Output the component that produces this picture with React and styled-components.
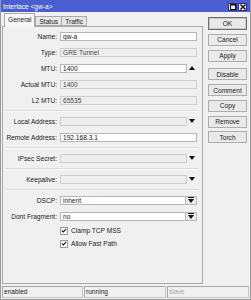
import React from "react";
import styled, { createGlobalStyle } from "styled-components";

const Global = createGlobalStyle`
	html, body {
		margin: 0;
		padding: 0;
		background: #f0f0f0;
	}
	* {
		box-sizing: border-box;
	}
`;

const Up = () => (
	<svg width="6" height="4" viewBox="0 0 6 4">
		<polygon points="0,4 6,4 3,0" fill="#111" />
	</svg>
);

const Down = () => (
	<svg width="6" height="4" viewBox="0 0 6 4">
		<polygon points="0,0 6,0 3,4" fill="#111" />
	</svg>
);

const DropIcon = () => (
	<svg width="6" height="6" viewBox="0 0 6 6">
		<rect x="0" y="0" width="6" height="1" fill="#111" />
		<polygon points="0,2 6,2 3,6" fill="#111" />
	</svg>
);

const Check = () => (
	<svg width="7" height="7" viewBox="0 0 7 7">
		<polyline points="1,3.5 2.8,5.3 6,1.5" fill="none" stroke="#111" strokeWidth="1.3" />
	</svg>
);

const App = () => {
	return (
		<>
			<Global />
			<Window>
				<TitleBar>
					<Title>Interface &lt;gw-a&gt;</Title>
					<TitleButtons>
						<TitleBtn>
							<svg width="6" height="6" viewBox="0 0 6 6">
								<rect x="0.5" y="0.5" width="5" height="5" fill="none" stroke="#111" />
								<rect x="0" y="0" width="6" height="1.5" fill="#111" />
							</svg>
						</TitleBtn>
						<TitleBtn>
							<svg width="6" height="6" viewBox="0 0 6 6">
								<path d="M0.5 0.5 L5.5 5.5 M5.5 0.5 L0.5 5.5" stroke="#111" strokeWidth="1.4" />
							</svg>
						</TitleBtn>
					</TitleButtons>
				</TitleBar>
				<Main>
					<Left>
						<Tabs>
							<Tab active>General</Tab>
							<Tab>Status</Tab>
							<Tab>Traffic</Tab>
						</Tabs>
						<Panel>
							<Row>
								<Label>Name:</Label>
								<Field>gw-a</Field>
							</Row>
							<Row>
								<Label>Type:</Label>
								<Field disabled>GRE Tunnel</Field>
							</Row>
							<Row>
								<Label>MTU:</Label>
								<Field short>1400</Field>
								<Arrow><Up /></Arrow>
							</Row>
							<Row>
								<Label>Actual MTU:</Label>
								<Field disabled>1400</Field>
							</Row>
							<Row>
								<Label>L2 MTU:</Label>
								<Field disabled>65535</Field>
							</Row>
							<Divider />
							<Row>
								<Label>Local Address:</Label>
								<Field short disabled></Field>
								<Arrow><Down /></Arrow>
							</Row>
							<Row>
								<Label>Remote Address:</Label>
								<Field>192.168.3.1</Field>
							</Row>
							<Divider />
							<Row>
								<Label>IPsec Secret:</Label>
								<Field short disabled></Field>
								<Arrow><Down /></Arrow>
							</Row>
							<Divider />
							<Row>
								<Label>Keepalive:</Label>
								<Field short disabled></Field>
								<Arrow><Down /></Arrow>
							</Row>
							<Divider />
							<Row>
								<Label>DSCP:</Label>
								<Combo>
									<ComboText>inherit</ComboText>
									<ComboBtn><DropIcon /></ComboBtn>
								</Combo>
							</Row>
							<Row>
								<Label>Dont Fragment:</Label>
								<Combo>
									<ComboText>no</ComboText>
									<ComboBtn><DropIcon /></ComboBtn>
								</Combo>
							</Row>
							<CheckRow>
								<Box><Check /></Box>
								<span>Clamp TCP MSS</span>
							</CheckRow>
							<CheckRow>
								<Box><Check /></Box>
								<span>Allow Fast Path</span>
							</CheckRow>
						</Panel>
					</Left>
					<Buttons>
						<Button primary>OK</Button>
						<Button>Cancel</Button>
						<Button>Apply</Button>
						<Button gap>Disable</Button>
						<Button>Comment</Button>
						<Button>Copy</Button>
						<Button>Remove</Button>
						<Button>Torch</Button>
					</Buttons>
				</Main>
				<StatusBar>
					<StatusCell w="81px">enabled</StatusCell>
					<StatusCell w="82px">running</StatusCell>
					<StatusCell faded>slave</StatusCell>
				</StatusBar>
			</Window>
		</>
	);
};

const Window = styled.div`
	width: 251px;
	height: 300px;
	display: flex;
	flex-direction: column;
	background: #f0f0f0;
	border-left: 1px solid #9a9a9a;
	border-right: 1px solid #9a9a9a;
	border-bottom: 1px solid #9a9a9a;
	font-family: "Liberation Sans", Arial, sans-serif;
	font-size: 6.6px;
	color: #1e1e1e;
	overflow: hidden;
`;

const TitleBar = styled.div`
	height: 12px;
	margin: 0 -1px;
	background: #4b5ecf;
	display: flex;
	align-items: center;
	justify-content: space-between;
	padding: 0 4px 0 3px;
`;

const Title = styled.span`
	color: #fff;
	font-size: 6.6px;
`;

const TitleButtons = styled.div`
	display: flex;
	gap: 1px;
	margin-top: 1px;
`;

const TitleBtn = styled.div`
	width: 9px;
	height: 8px;
	background: #e9e9ee;
	border: 1px solid #30307a;
	display: flex;
	align-items: center;
	justify-content: center;
`;

const Main = styled.div`
	flex: 1;
	display: flex;
	min-height: 0;
`;

const Left = styled.div`
	width: 202px;
	display: flex;
	flex-direction: column;
	padding: 1px 0 1px 1px;
`;

const Tabs = styled.div`
	height: 13px;
	display: flex;
	align-items: flex-end;
	padding-left: 2px;
`;

const Tab = styled.div`
	height: ${({ active }) => (active ? "14px" : "10px")};
	margin-bottom: ${({ active }) => (active ? "-1px" : "0")};
	padding: ${({ active }) => (active ? "2px 3px 0" : "1px 3px 0")};
	background: ${({ active }) => (active ? "#f7f7f7" : "#e6e6e6")};
	border: 1px solid #a9a9a9;
	border-bottom: ${({ active }) => (active ? "none" : "1px solid #a9a9a9")};
	margin-right: ${({ active }) => (active ? "0" : "-1px")};
	position: relative;
	z-index: ${({ active }) => (active ? 2 : 1)};
	font-size: 6.6px;
	line-height: 8px;
`;

const Panel = styled.div`
	flex: 1;
	border: 1px solid #a9a9a9;
	background: #f0f0f0;
	padding: 1px 4px 0 0;
	display: flex;
	flex-direction: column;
`;

const Row = styled.div`
	height: 16px;
	display: flex;
	align-items: center;
`;

const Label = styled.div`
	width: 54px;
	margin-right: 3px;
	text-align: right;
	white-space: nowrap;
	color: #222;
`;

const Field = styled.div`
	width: ${({ short }) => (short ? "127px" : "137px")};
	height: 9px;
	border: 1px solid ${({ disabled }) => (disabled ? "#cdcdcd" : "#b6b6b6")};
	background: ${({ disabled }) => (disabled ? "#eeeeee" : "#ffffff")};
	color: ${({ disabled }) => (disabled ? "#444" : "#111")};
	padding-left: 2px;
	line-height: 7px;
	white-space: nowrap;
	overflow: hidden;
`;

const Arrow = styled.div`
	width: 10px;
	display: flex;
	justify-content: center;
`;

const Combo = styled.div`
	width: 137px;
	height: 9px;
	display: flex;
	border: 1px solid #b6b6b6;
	background: #fff;
`;

const ComboText = styled.div`
	flex: 1;
	padding-left: 2px;
	line-height: 7px;
`;

const ComboBtn = styled.div`
	width: 11px;
	border-left: 1px solid #b6b6b6;
	background: #ececec;
	display: flex;
	align-items: center;
	justify-content: center;
`;

const Divider = styled.div`
	height: 5px;
	display: flex;
	align-items: center;
	&::after {
		content: "";
		display: block;
		width: 100%;
		margin-left: 3px;
		border-top: 1px solid #dcdcdc;
		border-bottom: 1px solid #fafafa;
	}
`;

const CheckRow = styled.div`
	height: 13px;
	display: flex;
	align-items: center;
	padding-left: 57px;
	gap: 3px;
	color: #222;
`;

const Box = styled.div`
	width: 8px;
	height: 8px;
	border: 1px solid #9a9a9a;
	background: #fff;
	display: flex;
	align-items: center;
	justify-content: center;
`;

const Buttons = styled.div`
	flex: 1;
	display: flex;
	flex-direction: column;
	padding: 5px 0 0 5px;
	gap: 3.75px;
`;

const Button = styled.div`
	width: 39px;
	height: ${({ primary }) => (primary ? "13px" : "12px")};
	margin-top: ${({ gap }) => (gap ? "3px" : "0")};
	border: 1px solid ${({ primary }) => (primary ? "#6e6e6e" : "#adadad")};
	box-shadow: ${({ primary }) => (primary ? "inset 0 0 0 1px #c8c8c8" : "none")};
	background: #e9e9e9;
	display: flex;
	align-items: center;
	justify-content: center;
	color: #222;
`;

const StatusBar = styled.div`
	height: 12px;
	display: flex;
	gap: 1px;
	margin: 1px 1px 1px 1px;
`;

const StatusCell = styled.div`
	width: ${({ w }) => w || "auto"};
	flex: ${({ w }) => (w ? "none" : "1")};
	border: 1px solid #c4c4c4;
	border-top-color: #a8a8a8;
	border-left-color: #a8a8a8;
	padding-left: 1px;
	line-height: 10px;
	color: ${({ faded }) => (faded ? "#a8a8a8" : "#222")};
`;

export default App;
